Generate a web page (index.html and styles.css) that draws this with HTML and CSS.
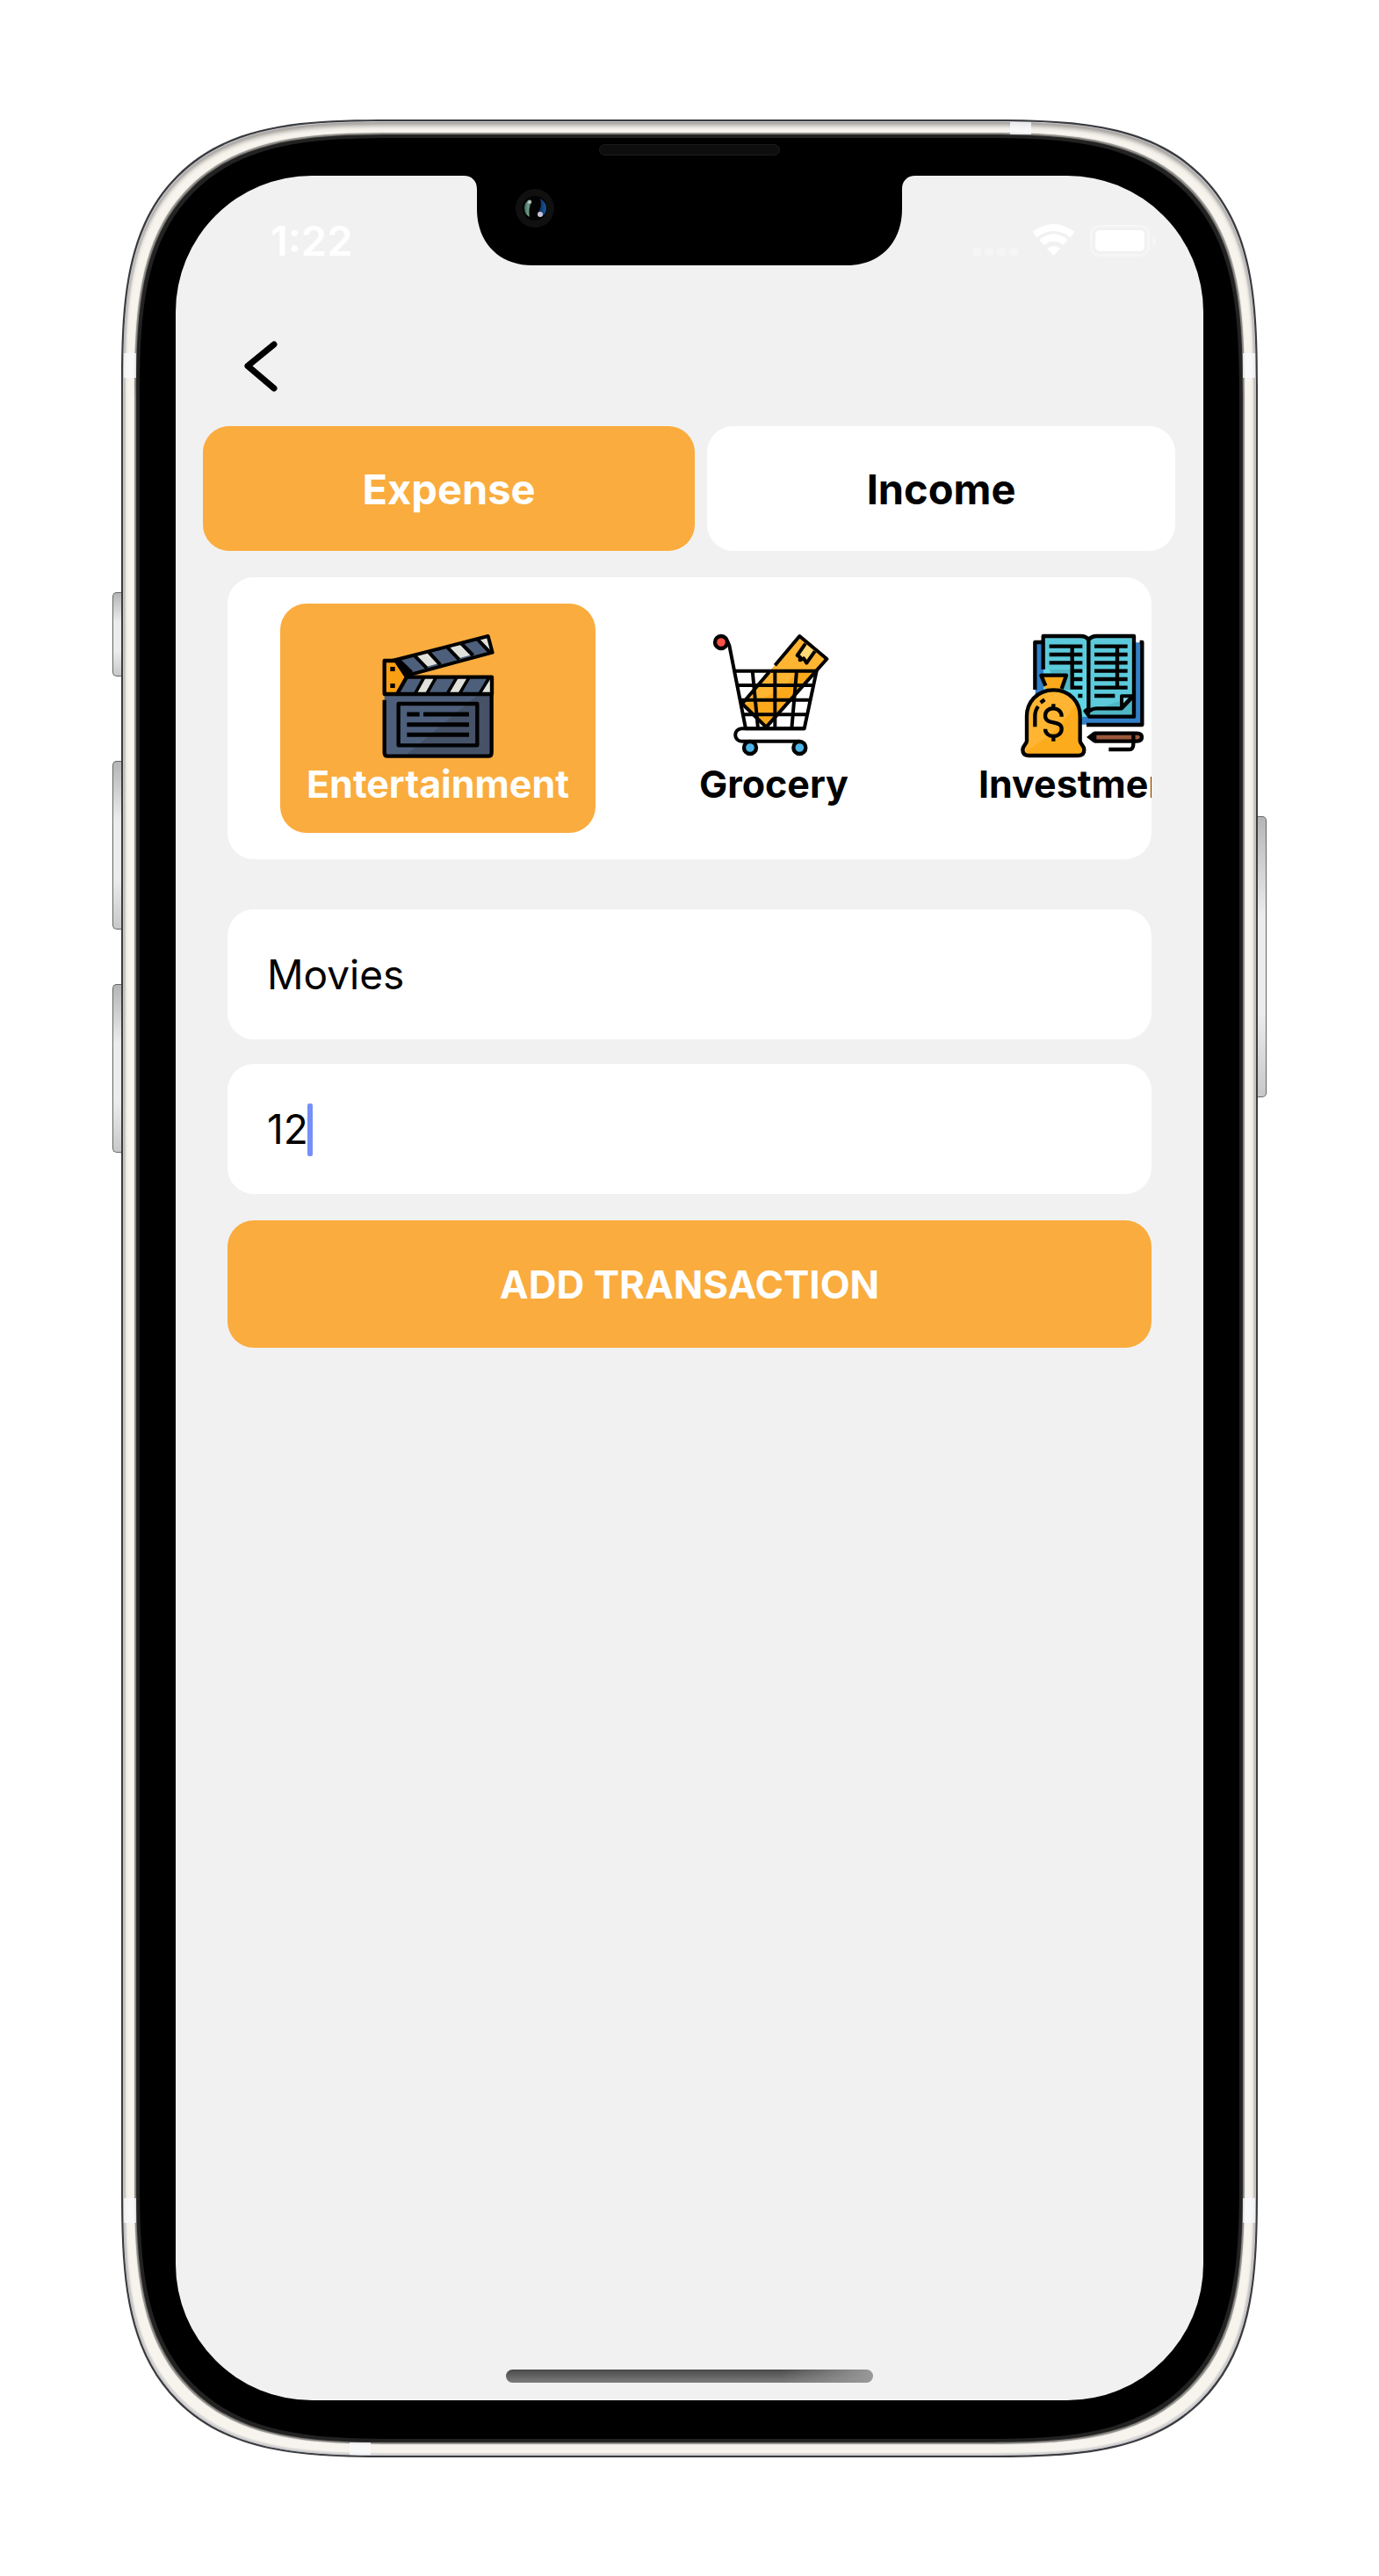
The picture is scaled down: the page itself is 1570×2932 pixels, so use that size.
FILE: index.html
```html
<!DOCTYPE html>
<html lang="en">
<head>
<meta charset="utf-8">
<meta name="viewport" content="width=device-width, initial-scale=1">
<title>Add transaction</title>
<link rel="stylesheet" href="styles.css">
</head>
<body>
<div class="phone">
  <span class="key key-mute"></span>
  <span class="key key-up"></span>
  <span class="key key-down"></span>
  <span class="key key-power"></span>
  <span class="band band-top"></span>
  <span class="band band-bottom"></span>
  <span class="band band-side band-left band-upper"></span>
  <span class="band band-side band-left band-lower"></span>
  <span class="band band-side band-right band-upper"></span>
  <span class="band band-side band-right band-lower"></span>
  <span class="speaker"></span>

  <div class="screen">
    <svg class="notch" viewBox="0 0 514 102" aria-hidden="true">
      <defs>
        <linearGradient id="lens-green" x1="0" x2="1"><stop offset="0" stop-color="#3d6a55"/><stop offset=".5" stop-color="#6f9d86"/><stop offset="1" stop-color="#1c2a24"/></linearGradient>
        <linearGradient id="lens-blue" x1="0" x2="1"><stop offset="0" stop-color="#0c2b55"/><stop offset="1" stop-color="#1a5699"/></linearGradient>
      </defs>
      <path d="M0 0C9 0 15 6 15 15V38C15 76 40 102 78 102H436C474 102 499 76 499 38V15C499 6 505 0 514 0Z"/>
      <circle cx="81" cy="37" r="22" fill="#101010"/>
      <circle cx="81" cy="37" r="14" fill="#030303"/>
      <path d="M75 27Q69 30 69 37T75 47Q73 37 78 29Z" fill="url(#lens-green)"/>
      <path d="M87 26Q94 30 94 37T88 47L84 43Q90 35 87 26Z" fill="url(#lens-blue)"/>
      <circle cx="75" cy="30" r="2" fill="#b9c6bf"/>
      <circle cx="87" cy="44" r="3" fill="#c8c3d6"/>
    </svg>

    <header class="status">
      <time class="clock">1:22</time>
      <svg class="status-icons" viewBox="0 0 210 38" aria-hidden="true" fill="#fff">
        <g opacity=".3"><rect x="0" y="28" width="10" height="9" rx="3"/><rect x="14" y="28" width="10" height="9" rx="3"/><rect x="28" y="28" width="10" height="9" rx="3"/><rect x="42" y="28" width="10" height="9" rx="3"/></g>
        <g fill="none" stroke="#fff" stroke-width="8"><path d="M71 13Q92.500-3 114 13"/><path d="M79 22Q92.500 11 106 22"/></g>
        <path d="M85 29Q92.500 23 100 29L92.500 37Z"/>
        <rect x="135.500" y="3.500" width="65" height="33" rx="9" fill="none" stroke="#fff" stroke-width="3" opacity=".35"/>
        <rect x="140" y="8" width="56" height="24" rx="5"/>
        <path d="M205 14Q209 16 209 20T205 26Z" opacity=".4"/>
      </svg>
    </header>

    <nav class="topbar">
      <a class="back" href="#back" aria-label="Back">
        <svg viewBox="0 0 38 58"><path d="M34 4L4 28.500L34 54" fill="none" stroke="#000" stroke-width="7" stroke-linecap="round" stroke-linejoin="round"/></svg>
      </a>
    </nav>

    <main class="content">
      <div class="tabs">
        <button class="tab active" type="button">Expense</button>
        <button class="tab" type="button">Income</button>
      </div>

      <form class="form">
        <div class="categories">
          <button class="category active" type="button">
            <svg class="icon" viewBox="69 51 450 450" aria-hidden="true">
              <path d="M113 270H480V470Q480 482 468 482H125Q113 482 113 470Z" fill="#4d5f7b"/>
              <path d="M435 270H480V470Q480 482 468 482H182Z" fill="#455268"/>
              <path d="M140 156L467 72L482 128L195 205Z" fill="#4d5f7b"/>
              <path d="M218 136L258 126L296 166L256 177ZM328 108L368 98L406 137L367 148ZM432 82L467 72L480 122L472 122Z" fill="#e0e0dc"/>
              <path d="M160 151L206 196M214 137L258 182M262 124L304 170M325 107L368 152M373 94L416 138M428 80L472 126" stroke="#000" stroke-width="12"/>
              <path d="M150 153L198 203" stroke="#000" stroke-width="18"/>
              <path d="M140 156L467 72L482 128L195 205" fill="none" stroke="#000" stroke-width="12" stroke-linejoin="round"/>
              <path d="M188 212H480V268H155Z" fill="#4d5f7b"/>
              <path d="M245 212H290L262 268H217ZM358 212H402L372 268H328ZM480 212V268H442Z" fill="#e0e0dc"/>
              <path d="M249 212L218 268M290 212L258 268M361 212L328 268M403 212L370 268M472 212L438 268" stroke="#000" stroke-width="11"/>
              <path d="M113 156H152L189 212L156 270H113Z" fill="#f99f14"/>
              <path d="M156 270L189 212L152 156H113V270H480V212H189" fill="none" stroke="#000" stroke-width="13" stroke-linejoin="round"/>
              <path d="M133 177H149V192H133ZM133 234H149V249H133Z"/>
              <path d="M113 290V470Q113 482 125 482H468Q479 482 479 470V270M161 303H430V445H161Z" fill="none" stroke="#000" stroke-width="13" stroke-linejoin="round"/>
              <path d="M190 339H233M246 339H402M190 374H402M190 409H402" stroke="#000" stroke-width="15"/>
            </svg>
            <span>Entertainment</span>
          </button>
          <button class="category" type="button">
            <svg class="icon" viewBox="75 51 450 450" aria-hidden="true">
              <path d="M388 72L482 151L274 383L190 303Z" fill="#ffb531"/>
              <path d="M450 185L274 383L200 308Q330 270 380 192Z" fill="#fba91b"/>
              <path d="M412 101L440 124L412 162L400 149L390 154L380 140Z" fill="#ffd973"/>
              <g fill="none" stroke="#000" stroke-width="12" stroke-linejoin="round">
                <path d="M304 172L388 72L481 150L274 383L192 303L284 195"/>
                <path d="M408 98L380 138L390 144L389 154L402 148L412 164L440 124"/>
                <path d="M120 88L142 90L148 104L204 388H404L446 191H165M172 240H436M180 290H426M190 340H416M227 190L246 388M304 190V388M378 190L361 388"/>
                <path d="M404 388H190A21 21 0 0 0 190 431H388"/>
              </g>
              <g stroke="#000" stroke-width="13"><circle cx="120" cy="93" r="21" fill="#f75146"/><circle cx="219" cy="453" r="21" fill="#4cb4e7"/><circle cx="388" cy="453" r="21" fill="#4cb4e7"/></g>
            </svg>
            <span>Grocery</span>
          </button>
          <button class="category" type="button">
            <svg class="icon" viewBox="200 51 450 450" aria-hidden="true">
              <path d="M265 94H630V374H265Z" fill="#327fc8"/>
              <path d="M293 72H602V347H293Z" fill="#5ccadb"/>
              <path d="M293 183H447V347H293Z" fill="#5fd5e5"/>
              <path d="M602 72V347H447V330L602 278Z" fill="#4fb6c5"/>
              <path d="M313 185H385V255H340Z" fill="#4fb6c5"/>
              <g fill="none" stroke="#000" stroke-width="13" stroke-linejoin="round">
                <path d="M264 255V93H288M622 93H630V375H440"/>
                <path d="M292 186V72H420Q440 72 447 86Q455 72 475 72H602V347H450L436 328L447 320V86"/>
                <path d="M313 107H426M313 135H426M313 163H426M385 191H426M385 219H426M385 248H426M411 276H426M391 107V254"/>
                <path d="M467 107H580M467 135H580M467 163H580M467 191H580M467 219H580M467 248H580M467 276H537M545 107V254"/>
                <path d="M443 336Q453 319 475 319H560L600 277"/>
              </g>
              <path d="M560 277H597L560 316Z" fill="#8bdde7" stroke="#000" stroke-width="12" stroke-linejoin="round"/>
              <path d="M285 206H371L355 256H300Z" fill="#fba91b"/>
              <path d="M328 256C270 256 236 300 236 345V430C236 440 222 445 222 460Q222 480 242 480H412Q432 480 432 460C432 445 418 440 418 430V345C418 300 385 256 328 256Z" fill="#ffb531"/>
              <path d="M405 300Q418 320 418 345V430C418 440 432 445 432 460Q432 480 412 480H242Q230 480 226 470Q350 400 405 300Z" fill="#fcab1c"/>
              <g fill="none" stroke="#000" stroke-width="13" stroke-linejoin="round">
                <path d="M300 242L285 206H371L355 252"/>
                <path d="M328 256C270 256 236 300 236 345V430C236 440 222 445 222 460Q222 480 242 480H412Q432 480 432 460C432 445 418 440 418 430V345C418 300 385 256 328 256Z"/>
                <path d="M355 347C355 310 299 310 299 344C299 378 355 357 355 389C355 422 299 422 299 389M327 304V322M327 412V431"/>
                <path d="M264 382V345Q264 326 275 312M283 299L297 289"/>
              </g>
              <path d="M462 404H612Q630 404 630 417T612 431H462Z" fill="#9c583b"/>
              <path d="M440 417L464 398L474 408V426L464 436Z"/>
              <path d="M466 404H612Q629 404 629 417T612 431H466M600 404V440Q600 459 586 459H516" fill="none" stroke="#000" stroke-width="13"/>
            </svg>
            <span>Investment</span>
          </button>
        </div>

        <input class="field" type="text" value="Movies" aria-label="Description">
        <div class="amount">
          <input class="field" type="text" inputmode="decimal" value="12" aria-label="Amount">
          <span class="caret"></span>
        </div>
        <button class="submit" type="submit">ADD TRANSACTION</button>
      </form>
    </main>

    <span class="home-bar"></span>
  </div>
</div>
</body>
</html>
```
FILE: styles.css
```css
* {
  box-sizing: border-box;
}

body {
  margin: 0;
  min-height: 100vh;
  padding: 136px 138px 135px;
  display: flex;
  background: #fff;
  color: #000;
  font-family: Inter, "Liberation Sans", sans-serif;
}

button,
input {
  margin: 0;
  border: 0;
  color: inherit;
  font-family: inherit;
}

/* Device shell */
.phone {
  position: relative;
  flex: 1;
  min-width: 0;
  display: flex;
  padding: 62px 60px 63px;
  border: 2px solid #3a3c3f;
  border-radius: 218px;
  background: #000;
  box-shadow:
    inset 0 0 0 1px #c3c3cc,
    inset 0 4px 5px 1px #a5a19c,
    inset 0 0 1px 3px #dcdad8,
    inset 0 0 1px 13px #f7f4ee,
    inset 0 0 1px 15px #8f8d88,
    inset 0 0 0 19px #222;
}

@supports (corner-shape: superellipse(1.5)) {
  .phone {
    border-radius: 305px;
    corner-shape: superellipse(1.57);
  }
}

.key {
  position: absolute;
  left: -12px;
  width: 10px;
  height: 192px;
  border: 1px solid #666;
  border-right: 0;
  border-radius: 5px 0 0 5px;
  background: linear-gradient(#b5b5b5, #ececec 35%, #ececec 70%, #c8c8c8);
}

.key-mute { top: 536px; height: 96px; }
.key-up { top: 728px; }
.key-down { top: 982px; }

.key-power {
  top: 791px;
  left: auto;
  right: -12px;
  height: 320px;
  border: 1px solid #666;
  border-left: 0;
  border-radius: 0 5px 5px 0;
}

.band {
  position: absolute;
  width: 24px;
  height: 14px;
  background: rgba(249, 250, 252, 0.8);
}

.band-top { top: 1px; right: 256px; }
.band-bottom { bottom: 1px; left: 258px; }
.band-side { width: 14px; height: 28px; }
.band-left { left: 1px; }
.band-right { right: 1px; }
.band-upper { top: 264px; }
.band-lower { bottom: 265px; }

.speaker {
  position: absolute;
  top: 26px;
  left: calc(50% - 103px);
  width: 206px;
  height: 13px;
  border: 1px solid #1c1c1c;
  border-radius: 7px;
  background: #0e0e0e;
}

/* Screen */
.screen {
  position: relative;
  flex: 1;
  min-width: 0;
  display: flex;
  flex-direction: column;
  overflow: hidden;
  border-radius: 155px;
  background: #f1f1f1;
}

.notch {
  position: absolute;
  top: 0;
  left: calc(50% - 257px);
  width: 514px;
  height: 102px;
}

.status {
  display: flex;
  align-items: center;
  justify-content: space-between;
  height: 146px;
  padding: 0 53px 0 108px;
  color: #fff;
}

.clock {
  font-size: 47px;
  font-weight: 600;
}

.status-icons {
  width: 210px;
  height: 38px;
}

.topbar {
  display: flex;
  align-items: center;
  height: 139px;
  padding: 2px 78px 0;
}

.back svg {
  display: block;
  width: 38px;
  height: 58px;
}

.content {
  flex: 1;
  padding: 0 32px 0 31px;
}

.tabs {
  display: flex;
  gap: 14px;
}

.tab {
  flex: 1 1 auto;
  height: 142px;
  border-radius: 30px;
  background: #fff;
  font-size: 47px;
  font-weight: 700;
}

.tab.active,
.category.active {
  background: #faac3e;
  color: #fff;
}

.form {
  display: flex;
  flex-direction: column;
  padding: 30px 27px 30px 28px;
}

.categories {
  display: flex;
  gap: 88px;
  margin-bottom: 57px;
  padding: 30px 60px;
  overflow: hidden;
  border-radius: 30px;
  background: #fff;
}

.category {
  flex: none;
  display: flex;
  flex-direction: column;
  align-items: center;
  padding: 30px;
  border-radius: 30px;
  background: transparent;
  font-size: 43px;
  font-weight: 700;
  line-height: 51px;
}

.icon {
  display: block;
  width: 150px;
  height: 150px;
}

.field {
  display: block;
  width: 100%;
  height: 148px;
  padding: 0 45px;
  border-radius: 30px;
  background: #fff;
  font-size: 46px;
  outline: 0;
}

.amount {
  position: relative;
  margin: 28px 0 30px;
}

.caret {
  position: absolute;
  top: 45px;
  left: 91px;
  width: 6px;
  height: 60px;
  border-radius: 2px;
  background: #7590f8;
}

.submit {
  height: 145px;
  border-radius: 30px;
  background: #faac3e;
  color: #fff;
  font-size: 44px;
  font-weight: 700;
}

.home-bar {
  align-self: center;
  width: 418px;
  height: 15px;
  margin-bottom: 20px;
  border-radius: 8px;
  background: linear-gradient(90deg, transparent 75%, #999), linear-gradient(#4a4a4a, #7c7c7c);
}
```
